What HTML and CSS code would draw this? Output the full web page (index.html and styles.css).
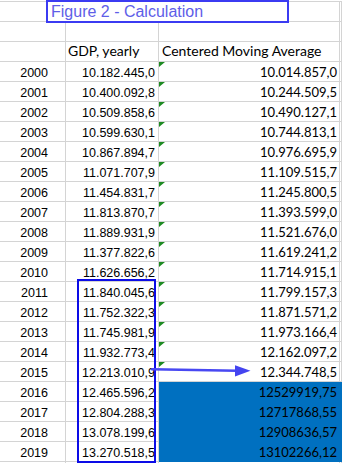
FILE: index.html
```html
<!DOCTYPE html>
<html>
<head>
<meta charset="utf-8">
<link rel="stylesheet" href="styles.css">
</head>
<body>
<div class="sheet">
  <div class="row"><div class="cell a"></div><div class="cell b"></div><div class="cell c"></div><div class="cell d"></div></div>
  <div class="row"><div class="cell a"></div><div class="cell b"></div><div class="cell c"></div><div class="cell d"></div></div>
  <div class="row head"><div class="cell a"></div><div class="cell b">GDP, yearly</div><div class="cell c">Centered Moving Average</div><div class="cell d"></div></div>
  <div class="row"><div class="cell a">2000</div><div class="cell b">10.182.445,0</div><div class="cell c flag">10.014.857,0</div><div class="cell d"></div></div>
  <div class="row"><div class="cell a">2001</div><div class="cell b">10.400.092,8</div><div class="cell c flag">10.244.509,5</div><div class="cell d"></div></div>
  <div class="row"><div class="cell a">2002</div><div class="cell b">10.509.858,6</div><div class="cell c flag">10.490.127,1</div><div class="cell d"></div></div>
  <div class="row"><div class="cell a">2003</div><div class="cell b">10.599.630,1</div><div class="cell c flag">10.744.813,1</div><div class="cell d"></div></div>
  <div class="row"><div class="cell a">2004</div><div class="cell b">10.867.894,7</div><div class="cell c flag">10.976.695,9</div><div class="cell d"></div></div>
  <div class="row"><div class="cell a">2005</div><div class="cell b">11.071.707,9</div><div class="cell c flag">11.109.515,7</div><div class="cell d"></div></div>
  <div class="row"><div class="cell a">2006</div><div class="cell b">11.454.831,7</div><div class="cell c flag">11.245.800,5</div><div class="cell d"></div></div>
  <div class="row"><div class="cell a">2007</div><div class="cell b">11.813.870,7</div><div class="cell c flag">11.393.599,0</div><div class="cell d"></div></div>
  <div class="row"><div class="cell a">2008</div><div class="cell b">11.889.931,9</div><div class="cell c flag">11.521.676,0</div><div class="cell d"></div></div>
  <div class="row"><div class="cell a">2009</div><div class="cell b">11.377.822,6</div><div class="cell c flag">11.619.241,2</div><div class="cell d"></div></div>
  <div class="row"><div class="cell a">2010</div><div class="cell b">11.626.656,2</div><div class="cell c flag">11.714.915,1</div><div class="cell d"></div></div>
  <div class="row"><div class="cell a">2011</div><div class="cell b">11.840.045,6</div><div class="cell c flag">11.799.157,3</div><div class="cell d"></div></div>
  <div class="row"><div class="cell a">2012</div><div class="cell b">11.752.322,3</div><div class="cell c flag">11.871.571,2</div><div class="cell d"></div></div>
  <div class="row"><div class="cell a">2013</div><div class="cell b">11.745.981,9</div><div class="cell c flag">11.973.166,4</div><div class="cell d"></div></div>
  <div class="row"><div class="cell a">2014</div><div class="cell b">11.932.773,4</div><div class="cell c flag">12.162.097,2</div><div class="cell d"></div></div>
  <div class="row"><div class="cell a">2015</div><div class="cell b">12.213.010,9</div><div class="cell c flag">12.344.748,5</div><div class="cell d"></div></div>
  <div class="row sel"><div class="cell a">2016</div><div class="cell b">12.465.596,2</div><div class="cell c">12529919,75</div><div class="cell d"></div></div>
  <div class="row sel"><div class="cell a">2017</div><div class="cell b">12.804.288,3</div><div class="cell c">12717868,55</div><div class="cell d"></div></div>
  <div class="row sel"><div class="cell a">2018</div><div class="cell b">13.078.199,6</div><div class="cell c">12908636,57</div><div class="cell d"></div></div>
  <div class="row sel"><div class="cell a">2019</div><div class="cell b">13.270.518,5</div><div class="cell c">13102266,12</div><div class="cell d"></div></div>
  <div class="row"><div class="cell a"></div><div class="cell b"></div><div class="cell c"></div><div class="cell d"></div></div>
</div>
<div class="title">Figure 2 - Calculation</div>
<div class="highlight"></div>
<svg class="arrow" width="106" height="20" viewBox="0 0 106 20">
  <line x1="4" y1="9.3" x2="89" y2="10.7" stroke="#4848f2" stroke-width="2.5" stroke-linecap="round"/>
  <polygon points="87,5.2 102.5,10.7 87,16.4" fill="#4444f0"/>
</svg>
</body>
</html>
```

FILE: styles.css
```css
html, body {
  margin: 0;
  padding: 0;
  background: #ffffff;
}
body {
  width: 342px;
  height: 463px;
  overflow: hidden;
  position: relative;
  font-family: "Liberation Sans", Arial, sans-serif;
  color: #000;
}
.sheet {
  margin-top: 1px;
  border-top: 1px solid #d4d4d4;
}
.row {
  display: grid;
  grid-template-columns: 66px 93px 181px 1fr;
  height: 20px;
}
.cell {
  box-sizing: border-box;
  height: 20px;
  border-right: 1px solid #d4d4d4;
  border-bottom: 1px solid #d4d4d4;
  padding-top: 2px;
  line-height: 18px;
  white-space: nowrap;
  font-size: 12.5px;
}
.a {
  text-align: right;
  padding-right: 17px;
}
.b {
  text-align: right;
  padding-right: 3px;
}
.c {
  position: relative;
  text-align: right;
  padding-top: 1px;
  padding-right: 2px;
  font-family: Lato, "Open Sans", sans-serif;
  font-size: 13px;
}
.head .cell {
  padding-top: 0;
  text-align: left;
  font-family: Lato, "Open Sans", sans-serif;
  font-size: 14px;
}
.head .b {
  padding-left: 2px;
}
.head .c {
  padding-left: 3px;
}
.flag::before {
  content: "";
  position: absolute;
  left: 0;
  top: 0;
  width: 6px;
  height: 5px;
  background: #1d8a22;
  clip-path: polygon(0 0, 100% 0, 0 100%);
}
.sel .c,
.sel .d {
  background: #0070c0;
  border-color: #0070c0;
}
.title {
  position: absolute;
  left: 46px;
  top: 0;
  box-sizing: border-box;
  width: 243px;
  height: 23px;
  border: 2px solid #3b3bf2;
  background: #fff;
  padding: 1px 0 0 3px;
  line-height: 18px;
  font-size: 16px;
  color: #5e5ee8;
  white-space: nowrap;
}
.highlight {
  position: absolute;
  left: 77px;
  top: 279px;
  box-sizing: border-box;
  width: 79px;
  height: 184px;
  border: 2px solid #0c0ce6;
}
.arrow {
  position: absolute;
  left: 148px;
  top: 360px;
}
```
